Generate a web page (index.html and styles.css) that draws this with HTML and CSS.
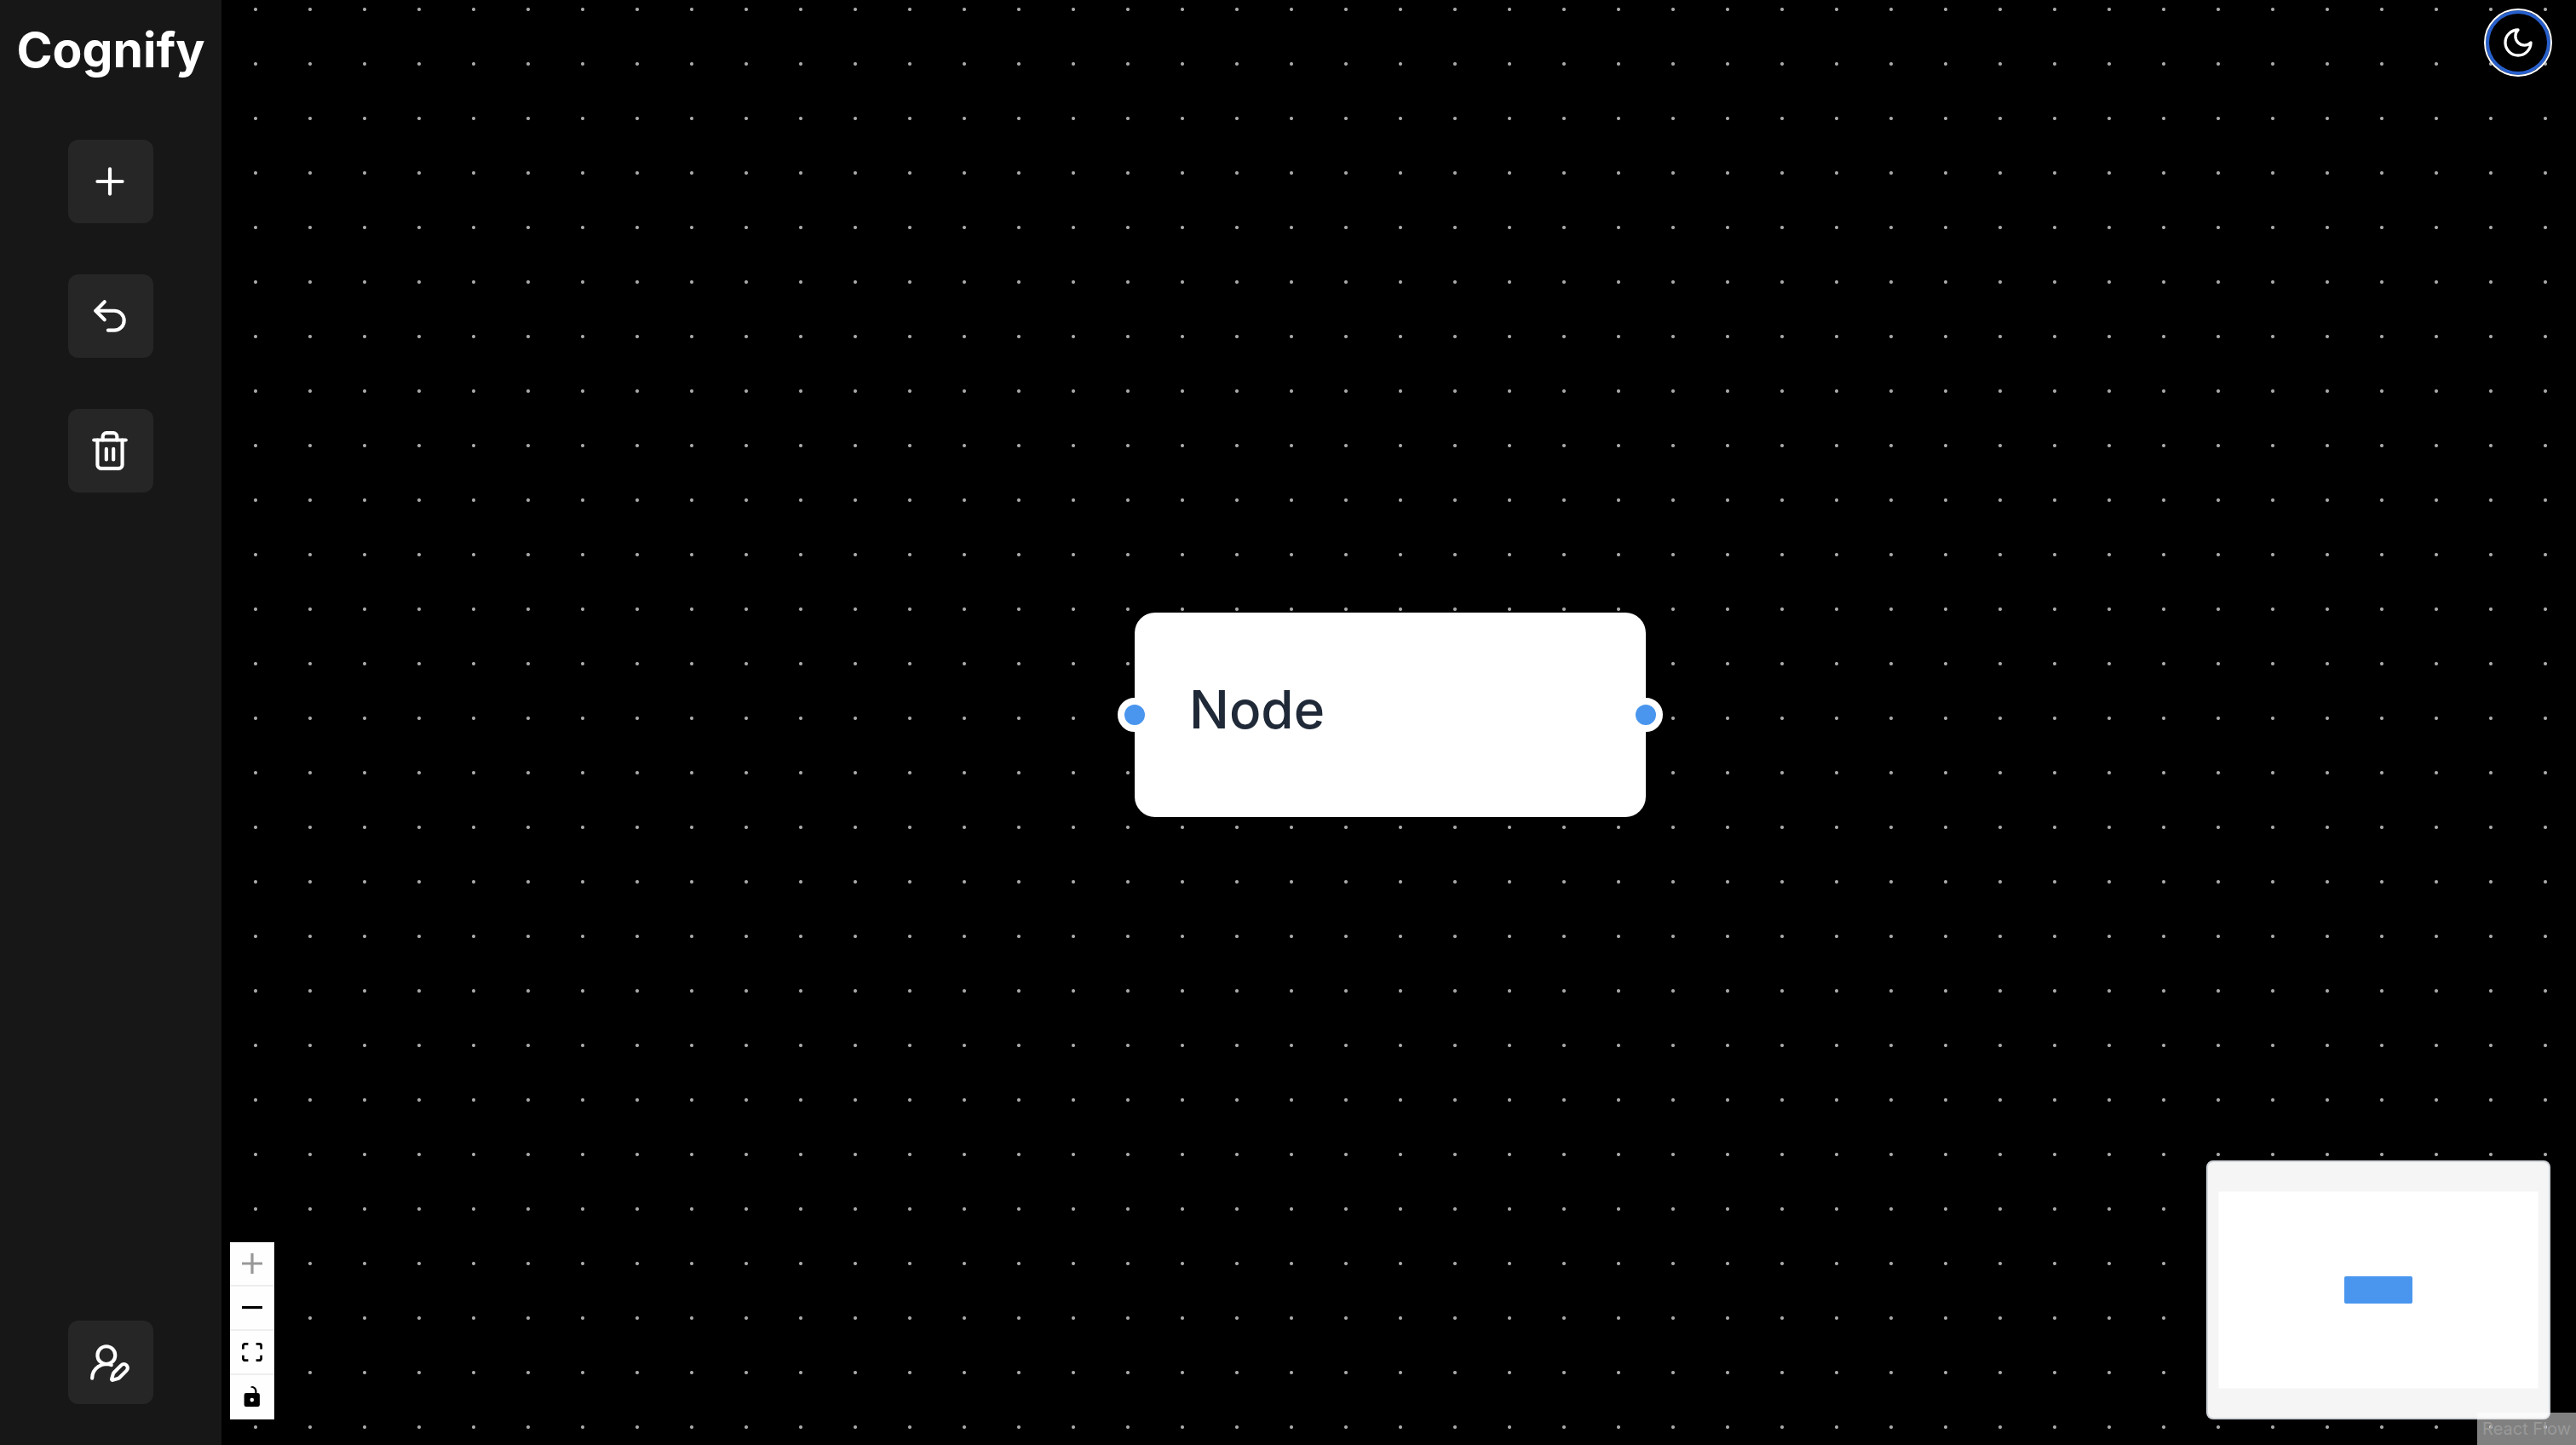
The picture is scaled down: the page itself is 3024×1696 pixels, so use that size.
FILE: index.html
```html
<!DOCTYPE html>
<html lang="en">
<head>
<meta charset="utf-8">
<meta name="viewport" content="width=device-width, initial-scale=1">
<title>Cognify</title>
<link rel="stylesheet" href="styles.css">
</head>
<body>
<div class="app">
  <aside class="sidebar">
    <h1 class="brand">Cognify</h1>
    <nav class="tools" aria-label="Tools">
      <button class="tool" type="button" aria-label="Add node">
        <svg class="icon" viewBox="0 0 24 24" aria-hidden="true"><path d="M5 12h14"/><path d="M12 5v14"/></svg>
      </button>
      <button class="tool" type="button" aria-label="Undo">
        <svg class="icon" viewBox="0 0 24 24" aria-hidden="true"><path d="M9 14 4 9l5-5"/><path d="M4 9h10.5a5.5 5.5 0 0 1 5.5 5.5a5.5 5.5 0 0 1-5.5 5.5H11"/></svg>
      </button>
      <button class="tool" type="button" aria-label="Delete">
        <svg class="icon" viewBox="0 0 24 24" aria-hidden="true"><path d="M3 6h18"/><path d="M19 6v14c0 1-1 2-2 2H7c-1 0-2-1-2-2V6"/><path d="M8 6V4c0-1 1-2 2-2h4c1 0 2 1 2 2v2"/><path d="M10 11v6"/><path d="M14 11v6"/></svg>
      </button>
    </nav>
    <button class="tool" type="button" aria-label="Edit profile">
      <svg class="icon" viewBox="0 0 24 24" aria-hidden="true"><path d="M2 21a8 8 0 0 1 10.821-7.487"/><path d="M21.378 16.626a1 1 0 0 0-3.004-3.004l-4.01 4.012a2 2 0 0 0-.506.854l-.837 2.87a.5.5 0 0 0 .62.62l2.87-.837a2 2 0 0 0 .854-.506z"/><circle cx="10" cy="8" r="5"/></svg>
    </button>
  </aside>

  <main class="canvas">
    <div class="node">
      <span class="handle handle-left"></span>
      <span class="node-label">Node</span>
      <span class="handle handle-right"></span>
    </div>

    <button class="theme" type="button" aria-label="Toggle theme">
      <svg class="icon icon-moon" viewBox="0 0 24 24" aria-hidden="true"><path d="M12 3a6 6 0 0 0 9 9 9 9 0 1 1-9-9Z"/></svg>
    </button>

    <div class="controls">
      <button class="control" type="button" aria-label="Zoom in" disabled>
        <svg viewBox="0 0 32 32" aria-hidden="true"><path d="M32 18.133H18.133V32h-4.266V18.133H0v-4.266h13.867V0h4.266v13.867H32z"/></svg>
      </button>
      <button class="control" type="button" aria-label="Zoom out">
        <svg viewBox="0 0 32 5" aria-hidden="true"><path d="M0 0h32v4.2H0z"/></svg>
      </button>
      <button class="control" type="button" aria-label="Fit view">
        <svg viewBox="0 0 32 30" aria-hidden="true"><path d="M3.692 4.63c0-.53.4-.938.939-.938h5.215V0H4.708C2.13 0 0 2.054 0 4.63v5.216h3.692V4.631zM27.354 0h-5.2v3.692h5.17c.53 0 .984.4.984.939v5.215H32V4.631A4.624 4.624 0 0027.354 0zm.954 24.83c0 .532-.4.94-.939.94h-5.215v3.768h5.215c2.577 0 4.631-2.13 4.631-4.707v-5.139h-3.692v5.139zm-23.677.94c-.531 0-.939-.4-.939-.94v-5.138H0v5.139c0 2.577 2.13 4.707 4.708 4.707h5.138V25.77H4.631z"/></svg>
      </button>
      <button class="control" type="button" aria-label="Toggle interactivity">
        <svg viewBox="0 0 25 32" aria-hidden="true"><path d="M21.333 10.667H19.81V7.619C19.81 3.429 16.38 0 12.19 0c-4.114 1.828-1.37 2.133.305 2.438 1.676.305 4.42 2.59 4.42 5.181v3.048H3.047A3.056 3.056 0 000 13.714v15.238A3.056 3.056 0 003.048 32h18.285a3.056 3.056 0 003.048-3.048V13.714a3.056 3.056 0 00-3.048-3.047zM12.19 24.533a3.056 3.056 0 01-3.047-3.047 3.056 3.056 0 013.047-3.048 3.056 3.056 0 013.048 3.048 3.056 3.056 0 01-3.048 3.047z"/></svg>
      </button>
    </div>

    <svg class="minimap" viewBox="0 0 400 300" role="img" aria-label="Mini map">
      <rect class="minimap-view" x="12.5" y="34.5" width="375" height="231"/>
      <rect class="minimap-node" x="160" y="134" width="80" height="32" rx="2"/>
    </svg>

    <a class="attribution" href="https://reactflow.dev">React Flow</a>
  </main>
</div>
</body>
</html>
```

FILE: styles.css
```css
* {
  box-sizing: border-box;
}

body {
  margin: 0;
  background: #000;
  font-family: Inter, "Liberation Sans", sans-serif;
}

button {
  margin: 0;
  border: 0;
  font: inherit;
  cursor: pointer;
}

.app {
  display: flex;
  min-height: 100vh;
}

/* Sidebar */
.sidebar {
  display: flex;
  flex: 0 0 260px;
  flex-direction: column;
  align-items: center;
  padding: 24px 0 48px;
  background: #171717;
  color: #fff;
}

.brand {
  margin: 0 0 70px;
  font-size: 57px;
  font-weight: 700;
  line-height: 70px;
}

.tools {
  display: flex;
  flex: 1;
  flex-direction: column;
  gap: 60px;
}

.tool {
  display: flex;
  width: 100px;
  padding: 24px;
  border-radius: 12px;
  background: #262626;
  color: #fff;
}

.icon {
  flex: none;
  width: 50px;
  height: 50px;
  fill: none;
  stroke: currentColor;
  stroke-width: 2;
  stroke-linecap: round;
  stroke-linejoin: round;
}

/* Canvas with dotted grid */
.canvas {
  position: relative;
  flex: 1;
  overflow: hidden;
  background-color: #000;
  background-image: radial-gradient(circle at 32px 32px, #aaa 1.5px, transparent 2.5px);
  background-position: 8px -21px;
  background-size: 64px 64px;
}

.node {
  position: absolute;
  top: 719px;
  left: 1072px;
  display: flex;
  align-items: center;
  width: 600px;
  height: 240px;
  padding: 0 64px 12px;
  border-radius: 24px;
  background: #fff;
}

.node-label {
  color: #1f2937;
  font-size: 62px;
  font-weight: 500;
  line-height: 96px;
}

.handle {
  position: absolute;
  top: 100px;
  width: 40px;
  height: 40px;
  border: 8px solid #fff;
  border-radius: 50%;
  background: #4a96ee;
}

.handle-left {
  left: -20px;
}

.handle-right {
  right: -20px;
}

.theme {
  position: absolute;
  top: 10px;
  right: 28px;
  display: flex;
  align-items: center;
  justify-content: center;
  width: 80px;
  height: 80px;
  padding: 0;
  border: 2px solid #fff;
  border-radius: 50%;
  background: #000;
  box-shadow: inset 0 0 0 4px #2860cc;
  color: #fff;
}

.icon-moon {
  width: 40px;
  height: 40px;
}

/* Zoom controls */
.controls {
  position: absolute;
  bottom: 30px;
  left: 10px;
}

.control {
  display: flex;
  align-items: center;
  justify-content: center;
  width: 52px;
  height: 52px;
  padding: 0;
  border-bottom: 2px solid #eee;
  background: #fefefe;
  color: #000;
}

.control:last-child {
  border-bottom-color: #fefefe;
}

.control svg {
  width: 100%;
  max-width: 24px;
  max-height: 24px;
  fill: currentColor;
}

.control:disabled svg {
  fill-opacity: 0.4;
}

/* Overview map */
.minimap {
  position: absolute;
  right: 30px;
  bottom: 30px;
  width: 404px;
  height: 304px;
  border: 2px solid #d1d5db;
  border-radius: 8px;
  background: #f5f5f5;
}

.minimap-view {
  fill: #fff;
}

.minimap-node {
  fill: #4a96ee;
}

.attribution {
  position: absolute;
  right: 0;
  bottom: 0;
  padding: 4px 6px;
  background: rgba(255, 255, 255, 0.5);
  color: #999;
  font-size: 20px;
  line-height: 30px;
  text-decoration: none;
}
```
